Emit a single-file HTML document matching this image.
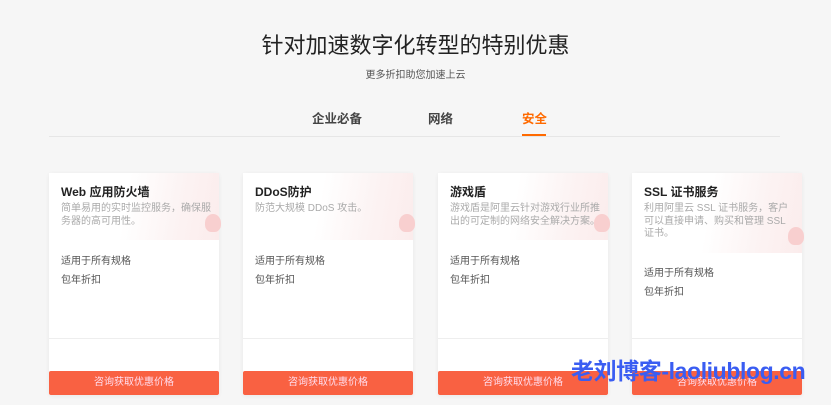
<!DOCTYPE html>
<html><head><meta charset="utf-8"><style>
*{margin:0;padding:0;box-sizing:border-box}
body{width:831px;height:405px;overflow:hidden;background:#f6f6f6;font-family:"Liberation Sans","Noto Sans CJK SC",sans-serif;position:relative}
.t{position:absolute;left:0;width:831px;text-align:center}
.card{position:absolute;top:173px;width:170px;height:222px;background:#fff;box-shadow:0 1px 4px rgba(0,0,0,.06)}
.hd{position:absolute;left:0;top:0;width:170px;height:67px;background:linear-gradient(100deg,#fff 45%,#fcf3f3 75%,#fbecec)}
.hd .b{position:absolute;right:-2px;bottom:8px;width:16px;height:18px;border-radius:50% 50% 40% 40%;background:#f8cfcf}
.ti{position:absolute;left:12px;top:10px;font-size:12px;font-weight:bold;color:#222}
.ds{position:absolute;left:12px;top:30px;width:152px;font-size:10px;line-height:12.5px;color:#aaa}
.l{position:absolute;left:12px;font-size:10px;color:#555}
.ln{position:absolute;left:0;top:165px;width:170px;height:1px;background:#eee}
.btn{position:absolute;left:0;bottom:0;width:170px;height:24px;background:#f96142;color:#fde;font-size:10px;text-align:center;line-height:24px;border-radius:2px}
</style></head><body>
<div class="t" style="top:28px;font-size:22px;color:#222">针对加速数字化转型的特别优惠</div>
<div class="t" style="top:66px;font-size:10px;color:#555">更多折扣助您加速上云</div>
<div style="position:absolute;left:312px;top:108px;font-size:12.5px;font-weight:bold;color:#444">企业必备</div>
<div style="position:absolute;left:428px;top:108px;font-size:12.5px;font-weight:bold;color:#444">网络</div>
<div style="position:absolute;left:522px;top:108px;font-size:12.5px;font-weight:bold;color:#ff6a00">安全</div>
<div style="position:absolute;left:522px;top:134px;width:24px;height:2px;background:#ff6a00"></div>
<div style="position:absolute;left:49px;top:136px;width:731px;height:1px;background:#e6e6e6"></div>

<div class="card" style="left:49px"><div class="hd"><div class="b"></div></div><div class="ti">Web 应用防火墙</div><div class="ds">简单易用的实时监控服务，确保服务器的高可用性。</div><div class="l" style="top:79px">适用于所有规格</div><div class="l" style="top:98px">包年折扣</div><div class="ln"></div><div class="btn">咨询获取优惠价格</div></div>
<div class="card" style="left:243px"><div class="hd"><div class="b"></div></div><div class="ti">DDoS防护</div><div class="ds">防范大规模 DDoS 攻击。</div><div class="l" style="top:79px">适用于所有规格</div><div class="l" style="top:98px">包年折扣</div><div class="ln"></div><div class="btn">咨询获取优惠价格</div></div>
<div class="card" style="left:438px"><div class="hd"><div class="b"></div></div><div class="ti">游戏盾</div><div class="ds">游戏盾是阿里云针对游戏行业所推出的可定制的网络安全解决方案。</div><div class="l" style="top:79px">适用于所有规格</div><div class="l" style="top:98px">包年折扣</div><div class="ln"></div><div class="btn">咨询获取优惠价格</div></div>
<div class="card" style="left:632px"><div class="hd" style="height:80px"><div class="b"></div></div><div class="ti">SSL 证书服务</div><div class="ds">利用阿里云 SSL 证书服务，客户可以直接申请、购买和管理 SSL 证书。</div><div class="l" style="top:91px">适用于所有规格</div><div class="l" style="top:110px">包年折扣</div><div class="ln"></div><div class="btn">咨询获取优惠价格</div></div>

<div style="position:absolute;left:571px;top:352px;font-size:23px;font-weight:bold;color:#3a5df2;letter-spacing:-0.4px;white-space:nowrap">老刘博客-laoliublog.cn</div>
</body></html>
